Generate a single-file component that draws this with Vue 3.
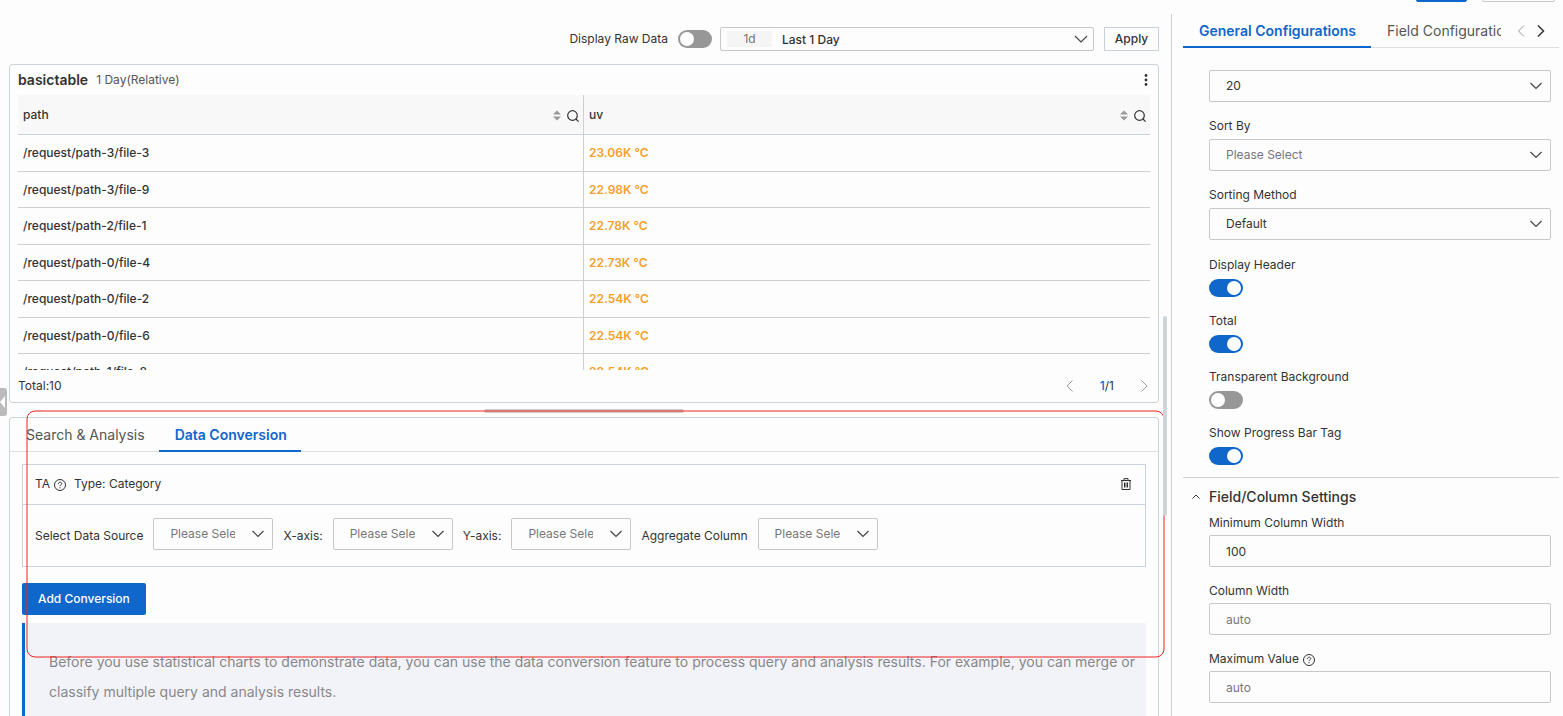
<script setup>
import { ref } from 'vue'

const rows = ref([
  { path: '/request/path-3/file-3', uv: '23.06K °C' },
  { path: '/request/path-3/file-9', uv: '22.98K °C' },
  { path: '/request/path-2/file-1', uv: '22.78K °C' },
  { path: '/request/path-0/file-4', uv: '22.73K °C' },
  { path: '/request/path-0/file-2', uv: '22.54K °C' },
  { path: '/request/path-0/file-6', uv: '22.54K °C' },
  { path: '/request/path-1/file-8', uv: '22.54K °C' }
])
const columns = ['path', 'uv']
const rawData = ref(false)

const selects = [
  { id: 'page-size', label: '', value: '20' },
  { id: 'sort-by', label: 'Sort By', value: 'Please Select', empty: true },
  { id: 'sort-method', label: 'Sorting Method', value: 'Default' }
]
const switches = ref([
  { id: 'display-header', label: 'Display Header', on: true },
  { id: 'total', label: 'Total', on: true },
  { id: 'transparent', label: 'Transparent Background', on: false },
  { id: 'progress-tag', label: 'Show Progress Bar Tag', on: true }
])
const inputs = ref([
  { id: 'min-width', label: 'Minimum Column Width', value: '100' },
  { id: 'col-width', label: 'Column Width', value: '' },
  { id: 'max-value', label: 'Maximum Value', value: '', help: true }
])
const sources = [
  { id: 'data-source', label: 'Select Data Source' },
  { id: 'x-axis', label: 'X-axis:' },
  { id: 'y-axis', label: 'Y-axis:' },
  { id: 'aggregate', label: 'Aggregate Column' }
]
</script>

<template>
  <div class="page">
    <main class="main">
      <div class="toolbar">
        <label for="raw">Display Raw Data</label>
        <input id="raw" v-model="rawData" class="switch" type="checkbox" role="switch" />
        <div class="time">
          <span class="chip">1d</span>
          <select aria-label="Time range"><option>Last 1 Day</option></select>
          <svg class="chev" width="14" height="14" viewBox="0 0 14 14"><path d="M1 4l6 6 6-6" /></svg>
        </div>
        <button class="apply" type="button">Apply</button>
      </div>

      <section class="panel">
        <header class="panel-head">
          <h2>basictable</h2>
          <span>1 Day(Relative)</span>
          <button class="plain more" type="button" aria-label="More">
            <svg width="4" height="12" viewBox="0 0 4 12"><circle cx="2" cy="1.5" r="1.4" /><circle cx="2" cy="6" r="1.4" /><circle cx="2" cy="10.5" r="1.4" /></svg>
          </button>
        </header>
        <div class="table-wrap">
          <table>
            <thead>
              <tr>
                <th v-for="c in columns" :key="c">
                  <div class="th">
                    <span>{{ c }}</span>
                    <button class="plain" type="button" :aria-label="'Sort ' + c">
                      <svg width="8" height="12" viewBox="0 0 8 12"><path d="M0 5.500L4 1.500l4 4zM0 7.500h8L4 11.500z" fill="#999" /></svg>
                    </button>
                    <button class="plain" type="button" :aria-label="'Search ' + c">
                      <svg class="line" width="12" height="14" viewBox="0 0 12 14"><circle cx="5.500" cy="7.500" r="4.800" /><path d="M9 11l2.600 2.600" /></svg>
                    </button>
                  </div>
                </th>
              </tr>
            </thead>
            <tbody>
              <tr v-for="r in rows" :key="r.path">
                <td>{{ r.path }}</td>
                <td class="uv">{{ r.uv }}</td>
              </tr>
            </tbody>
          </table>
        </div>
        <footer class="panel-foot">
          <span>Total:10</span>
          <nav class="pager" aria-label="Pages">
            <button class="plain" type="button" aria-label="Previous page"><svg class="faint" width="7" height="12" viewBox="0 0 7 12"><path d="M6.5.5L1 6l5.500 5.500" /></svg></button>
            <span><b>1</b>/1</span>
            <button class="plain" type="button" aria-label="Next page"><svg class="faint" width="7" height="12" viewBox="0 0 7 12"><path d="M.5.5L6 6 .5 11.500" /></svg></button>
          </nav>
        </footer>
      </section>

      <div class="splitter"><i></i></div>

      <section class="panel lower">
        <div class="tabs" role="tablist">
          <button class="tab" type="button" role="tab">Search &amp; Analysis</button>
          <button class="tab active" type="button" role="tab" aria-selected="true">Data Conversion</button>
        </div>
        <div class="lower-body">
          <div class="card">
            <div class="card-head">
              <span>TA</span>
              <svg class="help" width="12" height="12" viewBox="0 0 12 12"><circle cx="6" cy="6" r="5.500" /><path d="M4.300 4.900C4.300 2.600 7.800 2.700 7.700 4.700 7.600 5.900 6 5.800 6 7.200M6 8.200V9.300" /></svg>
              <span class="type">Type: Category</span>
              <button class="plain trash" type="button" aria-label="Delete">
                <svg width="10" height="12" viewBox="0 0 10 12"><path d="M0 2.500h10M3 2.500V.6h4v1.900M1 2.500v9h8v-9M3.500 4.500v5M5 4.500v5M6.500 4.500v5" /></svg>
              </button>
            </div>
            <div class="card-body">
              <template v-for="s in sources" :key="s.id">
                <label :for="s.id">{{ s.label }}</label>
                <div class="select small">
                  <select :id="s.id" class="empty"><option>Please Select</option></select>
                  <svg class="chev" width="12" height="12" viewBox="0 0 12 12"><path d="M.5 3l5.500 5.500L11.500 3" /></svg>
                </div>
              </template>
            </div>
          </div>
          <button class="add" type="button">Add Conversion</button>
          <p class="notice">Before you use statistical charts to demonstrate data, you can use the data conversion feature to process query and analysis results. For example, you can merge or classify multiple query and analysis results.</p>
        </div>
        <svg class="highlight" aria-hidden="true"><rect width="100%" height="100%" rx="8" /></svg>
      </section>

      <i class="scrollbar"></i>
      <button class="collapse" type="button" aria-label="Expand left panel">
        <svg width="6" height="12" viewBox="0 0 6 12"><path d="M5 0v12L0 6z" fill="#fff" /></svg>
      </button>
    </main>

    <aside class="side">
      <div class="actions">
        <button class="primary" type="button" aria-label="Confirm"></button>
        <button class="secondary" type="button" aria-label="Cancel"></button>
      </div>
      <div class="side-inner">
        <div class="tabs side-tabs">
          <div class="tab-clip" role="tablist">
            <button class="tab active" type="button" role="tab" aria-selected="true">General Configurations</button>
            <button class="tab" type="button" role="tab">Field Configurations</button>
          </div>
          <button class="plain" type="button" aria-label="Previous tabs"><svg class="faint" width="8" height="12" viewBox="0 0 8 12"><path d="M7 .5L1.500 6 7 11.500" /></svg></button>
          <button class="plain" type="button" aria-label="Next tabs"><svg class="line strong" width="8" height="12" viewBox="0 0 8 12"><path d="M1 .5L6.500 6 1 11.500" /></svg></button>
        </div>

        <div class="group">
          <div v-for="s in selects" :key="s.id" class="field">
            <label v-if="s.label" :for="s.id">{{ s.label }}</label>
            <div class="select">
              <select :id="s.id" :class="{ empty: s.empty }" :aria-label="s.label || 'Rows per page'"><option>{{ s.value }}</option></select>
              <svg class="chev" width="12" height="12" viewBox="0 0 12 12"><path d="M.5 3l5.500 5.500L11.500 3" /></svg>
            </div>
          </div>
        </div>
        <div class="group toggles">
          <div v-for="s in switches" :key="s.id" class="field">
            <label :for="s.id">{{ s.label }}</label>
            <input :id="s.id" v-model="s.on" class="switch" type="checkbox" role="switch" />
          </div>
        </div>

        <h3>
          <svg class="line" width="8" height="5" viewBox="0 0 8 5"><path d="M.5 4.500L4 1l3.500 3.500" /></svg>
          Field/Column Settings
        </h3>
        <div class="group texts">
          <div v-for="f in inputs" :key="f.id" class="field">
            <label :for="f.id">{{ f.label }}
              <svg v-if="f.help" class="help" width="12" height="12" viewBox="0 0 12 12"><circle cx="6" cy="6" r="5.500" /><path d="M4.300 4.900C4.300 2.600 7.800 2.700 7.700 4.700 7.600 5.900 6 5.800 6 7.200M6 8.200V9.300" /></svg>
            </label>
            <input :id="f.id" v-model="f.value" class="text" type="text" placeholder="auto" />
          </div>
        </div>
      </div>
    </aside>
  </div>
</template>

<style>
body {
  background: #fdfdfd;
}
</style>

<style scoped>
* {
  box-sizing: border-box;
}
.page {
  display: flex;
  height: 100vh;
  overflow: hidden;
  font-family: Inter, "Liberation Sans", sans-serif;
  font-size: 12px;
  line-height: 20px;
  color: #333;
}
button,
input,
select {
  font: inherit;
  color: inherit;
  margin: 0;
}
svg {
  display: block;
  flex: none;
}
.plain {
  display: block;
  border: 0;
  padding: 0;
  background: none;
}
.main {
  position: relative;
  flex: 1;
  min-width: 0;
  padding: 27px 12px 0 9px;
}
.toolbar {
  display: flex;
  align-items: center;
  justify-content: flex-end;
  height: 24px;
  margin-bottom: 13px;
}
.switch {
  appearance: none;
  display: block;
  width: 34px;
  height: 18px;
  padding: 2px;
  border-radius: 9px;
  background: #979797;
}
.switch::before {
  content: "";
  display: block;
  width: 14px;
  height: 14px;
  border-radius: 50%;
  background: #fff;
}
.switch:checked {
  background: #0f66cb;
}
.switch:checked::before {
  margin-left: 16px;
}
.toolbar .switch {
  margin: 0 8px 0 10px;
}
.time {
  position: relative;
  display: flex;
  align-items: center;
  width: 374px;
  height: 24px;
  padding-left: 6px;
  border: 1px solid #c8c8c8;
  border-radius: 2px;
}
.chip {
  width: 45px;
  height: 16px;
  line-height: 16px;
  text-align: center;
  color: #777;
  background: #f5f5f5;
}
.time select {
  appearance: none;
  flex: 1;
  height: 22px;
  border: 0;
  padding: 2px 10px 0;
  background: none;
  font-weight: 500;
}
.chev {
  position: absolute;
  right: 5px;
  pointer-events: none;
  fill: none;
  stroke: #444;
  stroke-width: 1.200;
}
.apply {
  height: 24px;
  width: 55px;
  margin-left: 10px;
  padding: 0;
  border: 1px solid #c9d0d8;
  background: none;
  line-height: 22px;
  font-weight: 500;
}
.panel {
  border: 1px solid #cdd3da;
  border-radius: 3px;
}
.panel-head {
  display: flex;
  align-items: center;
  height: 30px;
  padding: 0 10px 0 8px;
  color: #555;
}
.panel-head h2 {
  margin: 0 8px 0 0;
  font-size: 14px;
  font-weight: 600;
  color: #333;
}
.more {
  margin-left: auto;
}
.more svg {
  fill: #333;
}
.table-wrap {
  height: 275px;
  margin: 0 8px;
  overflow: hidden;
}
table {
  width: 100%;
  table-layout: fixed;
  border-collapse: separate;
  border-spacing: 0;
  font-weight: 500;
}
th,
td {
  padding: 0 5px;
  border-bottom: 1px solid #cdcfd2;
  text-align: left;
  font-weight: 500;
}
th {
  height: 40px;
  padding-right: 4px;
  background: #f8f8f8;
  border-bottom-color: #cbd2d9;
}
th:first-child,
td:first-child {
  border-right: 1px solid #cdcfd2;
}
td {
  height: 37px;
}
tr:nth-child(even) td {
  height: 36px;
}
.uv {
  color: #f5a02a;
  font-weight: 600;
}
.th {
  display: flex;
  align-items: center;
  gap: 6px;
}
.th span {
  flex: 1;
}
.line,
.faint,
.help,
.trash svg {
  fill: none;
  stroke: #333;
}
.th .line {
  stroke-width: 1.200;
}
.strong {
  stroke-width: 1.500;
}
.faint {
  stroke: #999;
}
.panel-foot {
  display: flex;
  align-items: center;
  justify-content: space-between;
  height: 32px;
  padding: 0 10px 0 8px;
}
.pager {
  display: flex;
  align-items: center;
  gap: 27px;
}
.pager b {
  color: #0f66cb;
  font-weight: 500;
}
.splitter {
  height: 14px;
  padding-top: 6px;
}
.splitter i {
  display: block;
  width: 200px;
  height: 4px;
  margin: 0 auto;
  border-radius: 2px;
  background: #ccc;
}
.lower {
  position: relative;
}
.tabs {
  display: flex;
  height: 34px;
  box-shadow: inset 0 -1px #dedede;
}
.tab {
  flex: none;
  border: 0;
  border-bottom: 2px solid transparent;
  padding: 2px 14px 0 16px;
  background: none;
  font-size: 14px;
  color: #555;
}
.tab.active {
  border-bottom-color: #0f66cb;
  color: #0f66cb;
  font-weight: 600;
}
.lower-body {
  padding: 12px;
}
.card {
  border: 1px solid #cbd2d9;
}
.card-head {
  display: flex;
  align-items: center;
  height: 40px;
  padding: 0 14px 2px 12px;
  border-bottom: 1px solid #cbd2d9;
}
.card-head .help {
  margin: 2px 8px 0 4px;
}
.trash {
  margin-left: auto;
}
.card-body {
  display: flex;
  align-items: center;
  gap: 10px;
  padding: 13px 12px 16px;
}
.card-body label {
  padding-top: 3px;
}
.select {
  position: relative;
  display: flex;
  align-items: center;
}
.select select {
  appearance: none;
  width: 100%;
  height: 32px;
  padding: 0 37px 0 16px;
  border: 1px solid #c8c8c8;
  border-radius: 2px;
  background: none;
}
.select .empty {
  color: #777;
}
.small {
  width: 120px;
}
.select .chev {
  right: 9px;
}
.add {
  display: block;
  height: 32px;
  margin: 16px 0 8px;
  padding: 0 16px;
  border: 0;
  border-radius: 2px;
  background: #0f66cb;
  color: #fff;
  font-weight: 500;
}
.notice {
  margin: 0;
  padding: 24px 4px 24px 24px;
  border-left: 3px solid #0f66cb;
  background: #f2f3f8;
  color: #888;
  font-size: 14px;
  line-height: 30px;
}
.highlight {
  position: absolute;
  left: 17px;
  top: -7px;
  width: calc(100% - 11px);
  height: 246px;
  overflow: visible;
  pointer-events: none;
  fill: none;
  stroke: #f2231f;
}
.scrollbar {
  position: absolute;
  right: 4px;
  top: 316px;
  width: 4px;
  height: 200px;
  border-radius: 2px;
  background: #cfd4d9;
}
.collapse {
  position: absolute;
  left: 0;
  top: 388px;
  width: 7px;
  height: 28px;
  padding: 0;
  border: 0;
  border-radius: 0 3px 3px 0;
  background: #bbb;
}
.side {
  display: flex;
  flex-direction: column;
  flex: none;
  width: 392px;
}
.actions {
  display: flex;
  align-items: flex-end;
  justify-content: flex-end;
  gap: 15px;
  height: 2px;
  margin-bottom: 12px;
  padding-right: 8px;
  overflow: hidden;
}
.actions button {
  flex: none;
  height: 32px;
  border: 1px solid #c8c8c8;
  border-radius: 2px;
  background: none;
}
.actions .primary {
  width: 51px;
  border-color: #0f66cb;
  background: #0f66cb;
}
.actions .secondary {
  width: 73px;
}
.side-inner {
  flex: 1;
  padding: 0 4px 0 11px;
  border-left: 1px solid #cfcfcf;
}
.side-tabs {
  align-items: center;
  gap: 12px;
  padding-right: 14px;
}
.side-tabs .tab {
  padding-right: 15px;
}
.tab-clip {
  display: flex;
  flex: 1;
  height: 34px;
  margin-right: 4px;
  overflow: hidden;
}
.group {
  padding: 0 8px 0 26px;
}
.side-tabs + .group {
  padding-top: 22px;
}
.field {
  display: flex;
  flex-direction: column;
  align-items: stretch;
  gap: 4px;
  margin-bottom: 13px;
}
.field label {
  display: flex;
  align-items: center;
  gap: 4px;
  height: 20px;
  padding-top: 2px;
}
.field label .help {
  margin-top: 2px;
}
.toggles {
  padding-top: 1px;
}
.toggles .field {
  align-items: flex-start;
  gap: 5px;
}
.toggles .field:last-child {
  margin-bottom: 12px;
}
.texts .field {
  gap: 3px;
}
h3 {
  display: flex;
  align-items: center;
  gap: 9px;
  height: 35px;
  margin: 0;
  padding: 3px 0 0 9px;
  border-top: 1px solid #d0d0d0;
  font-size: 14px;
  font-weight: 500;
}
.text {
  height: 32px;
  padding: 0 16px;
  border: 1px solid #c8c8c8;
  border-radius: 2px;
  background: none;
  outline: 0;
}
.text::placeholder {
  color: #777;
  opacity: 1;
}
</style>
